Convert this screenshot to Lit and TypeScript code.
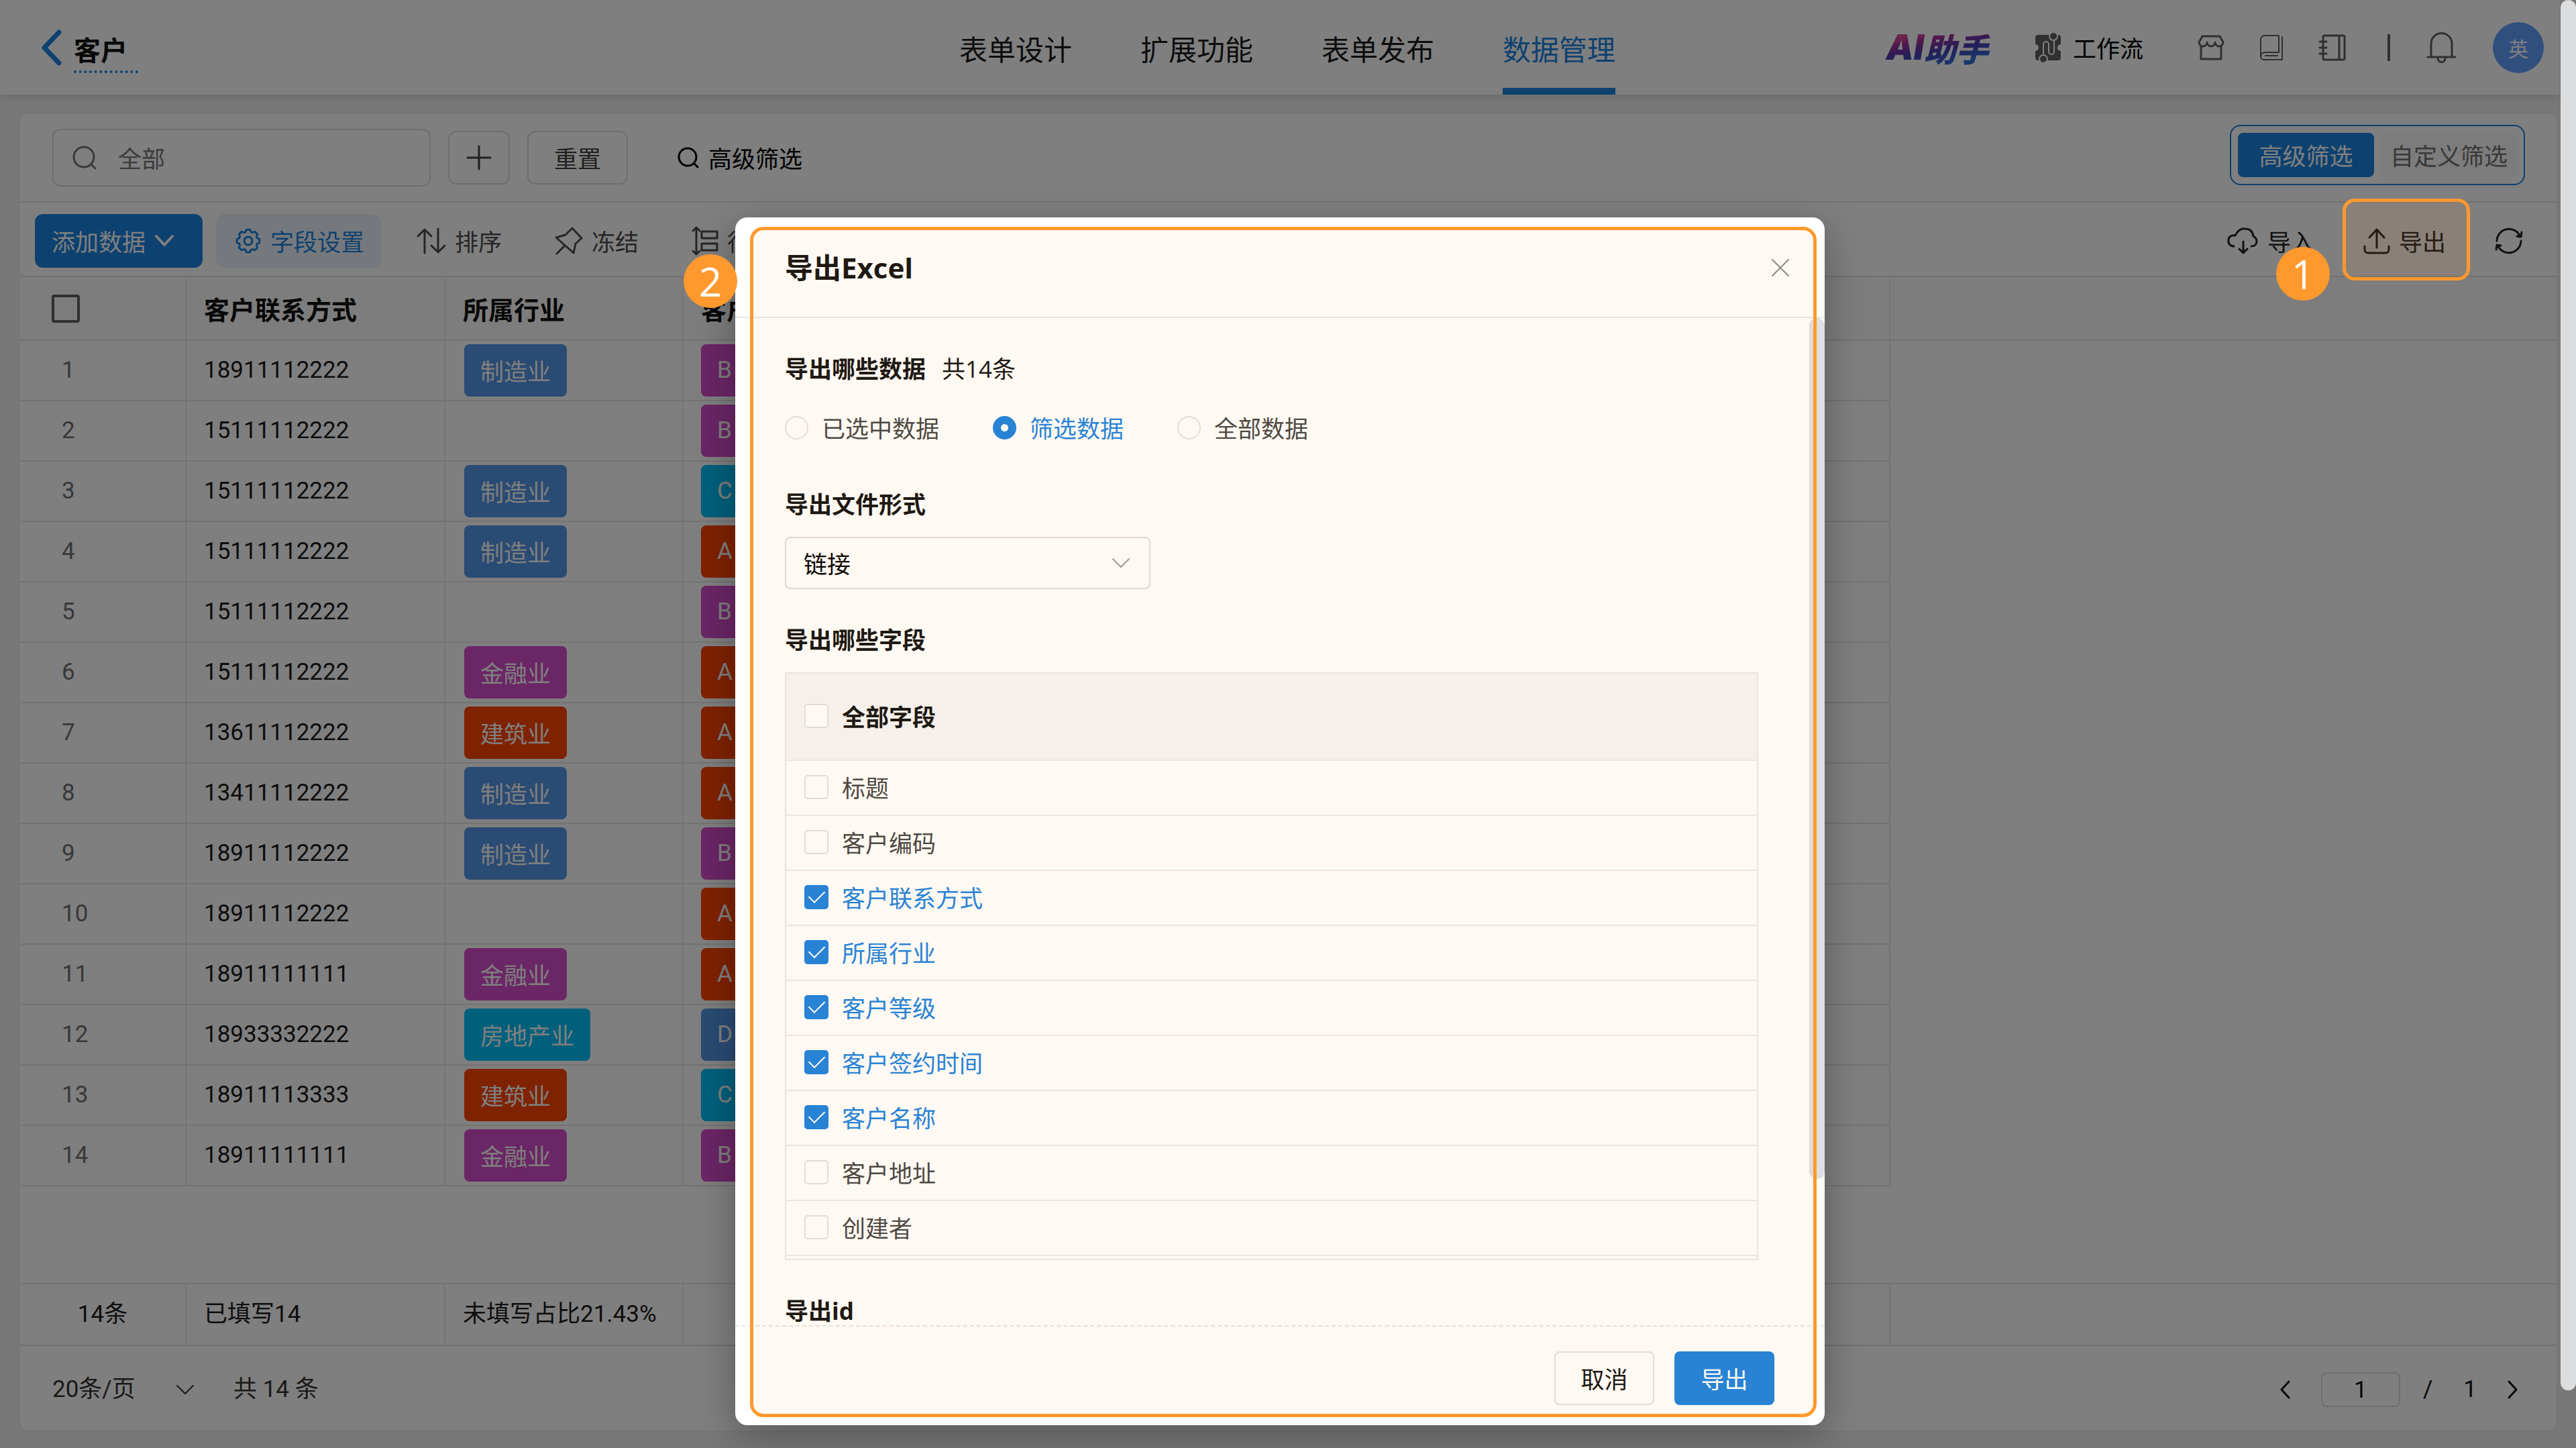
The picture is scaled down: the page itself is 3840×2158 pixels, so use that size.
import { LitElement, html, css, svg, nothing, TemplateResult } from "lit";
import { customElement, property } from "lit/decorators.js";
import { classMap } from "lit/directives/class-map.js";

interface Row {
  phone: string;
  industry: string;
  grade: string;
}

const ROWS: Row[] = [
  { phone: "18911112222", industry: "制造业", grade: "B" },
  { phone: "15111112222", industry: "", grade: "B" },
  { phone: "15111112222", industry: "制造业", grade: "C" },
  { phone: "15111112222", industry: "制造业", grade: "A" },
  { phone: "15111112222", industry: "", grade: "B" },
  { phone: "15111112222", industry: "金融业", grade: "A" },
  { phone: "13611112222", industry: "建筑业", grade: "A" },
  { phone: "13411112222", industry: "制造业", grade: "A" },
  { phone: "18911112222", industry: "制造业", grade: "B" },
  { phone: "18911112222", industry: "", grade: "A" },
  { phone: "18911111111", industry: "金融业", grade: "A" },
  { phone: "18933332222", industry: "房地产业", grade: "D" },
  { phone: "18911113333", industry: "建筑业", grade: "C" },
  { phone: "18911111111", industry: "金融业", grade: "B" },
];

const TONE: Record<string, string> = {
  制造业: "blue",
  金融业: "purple",
  建筑业: "red",
  房地产业: "cyan",
  A: "red",
  B: "purple",
  C: "cyan",
  D: "blue",
};

const FIELDS: [string, boolean][] = [
  ["标题", false],
  ["客户编码", false],
  ["客户联系方式", true],
  ["所属行业", true],
  ["客户等级", true],
  ["客户签约时间", true],
  ["客户名称", true],
  ["客户地址", false],
  ["创建者", false],
];

/** Outline of an eight-toothed cog centred in a 38 unit box. */
const cogPath = (() => {
  const points: string[] = [];
  const at = (radius: number, degrees: number) => {
    const a = (degrees * Math.PI) / 180;
    points.push(`${(19 + radius * Math.sin(a)).toFixed(1)} ${(19 - radius * Math.cos(a)).toFixed(1)}`);
  };
  for (let k = 0; k < 8; k++) {
    at(14, k * 45 - 17);
    at(17, k * 45 - 9);
    at(17, k * 45 + 9);
    at(14, k * 45 + 17);
  }
  return `M${points.join("L")}Z`;
})();

const ICONS: Record<string, { w: number; h: number; body: TemplateResult }> = {
  back: { w: 30, h: 54, body: svg`<path d="M26 4L4 27L26 50" stroke-width="7"/>` },
  flow: {
    w: 38,
    h: 44,
    body: svg`
      <path d="M4 3H34a4 4 0 0 1 4 4V17a5 5 0 0 0 0 10V37a4 4 0 0 1-4 4H4a4 4 0 0 1-4-4V27a5 5 0 0 0 0-10V7a4 4 0 0 1 4-4Z" fill="currentColor" stroke="none"/>
      <path d="M12 36V17a4 4 0 0 1 8 0V28a4 4 0 0 0 8 0V8" stroke="#fff" stroke-width="2"/>
      <circle cx="27" cy="5" r="6" fill="currentColor" stroke="#fff" stroke-width="2"/>
      <circle cx="12" cy="39" r="6" fill="currentColor" stroke="#fff" stroke-width="2"/>`,
  },
  shop: {
    w: 38,
    h: 38,
    body: svg`<path d="M6 2H32L37 11a6 6 0 0 1-12 0a6 6 0 0 1-12 0a6 6 0 0 1-12 0ZM4 17V36H34V17"/>`,
  },
  book: {
    w: 34,
    h: 38,
    body: svg`<path d="M28 1H7A6 6 0 0 0 1 7V32A6 6 0 0 1 7 26H28ZM1 32A5 5 0 0 0 6 37H33V3M8 31H26" stroke-width="2"/>`,
  },
  notebook: {
    w: 40,
    h: 40,
    body: svg`<path d="M8 2H36a2 2 0 0 1 2 2V36a2 2 0 0 1-2 2H8a2 2 0 0 1-2-2V4a2 2 0 0 1 2-2ZM30 2V38M1 11H11M1 20H11M1 29H11"/>`,
  },
  bell: {
    w: 45,
    h: 46,
    body: svg`<path d="M7 36V17A15 15 0 0 1 38 17V36M2 37H43M17 39a5 5 0 0 0 11 0"/>`,
  },
  search: { w: 36, h: 36, body: svg`<circle cx="17" cy="17" r="15"/><path d="M28 28L34 34"/>` },
  find: { w: 32, h: 32, body: svg`<circle cx="15" cy="15" r="13"/><path d="M25 25L30 30"/>` },
  plus: { w: 36, h: 36, body: svg`<path d="M18 1V35M1 18H35"/>` },
  cog: { w: 38, h: 38, body: svg`<path d=${cogPath}/><circle cx="19" cy="19" r="6"/>` },
  sort: { w: 42, h: 38, body: svg`<path d="M11 37V2M1 12L11 2L21 12M31 1V36M21 26L31 36L41 26"/>` },
  pin: { w: 40, h: 40, body: svg`<path d="M1 15L15 11L25 1L39 16L30 24L27 38ZM14 27L2 39"/>` },
  rows: {
    w: 38,
    h: 44,
    body: svg`<path d="M6 2V42M1 7L6 2L11 7M1 37L6 42L11 37M14 8H37V18H14ZM14 26H37V36H14Z"/>`,
  },
  cloud: {
    w: 46,
    h: 40,
    body: svg`<path d="M10 28C5 28 1 24 2 19C2 14 6 11 12 12C15 5 21 1 27 2C34 2 38 6 39 13C43 15 44 18 44 21C44 25 41 28 36 28M24 21V38M18 32L24 38L30 32"/>`,
  },
  upload: {
    w: 38,
    h: 38,
    body: svg`<path d="M19 2V29M8 14L19 2L30 14M1 27V32A5 5 0 0 0 6 37H32A5 5 0 0 0 37 32V27"/>`,
  },
  refresh: {
    w: 40,
    h: 40,
    body: svg`<path d="M2 20A18 18 0 0 1 36 12M38 20A18 18 0 0 1 4 28M39 7L38 14L32 13M1 33L2 26L8 27"/>`,
  },
  caret: { w: 28, h: 18, body: svg`<path d="M2 2L14 15L26 2" stroke-width="4"/>` },
  down: { w: 28, h: 16, body: svg`<path d="M2 2L14 14L26 2" stroke-width="2"/>` },
  left: { w: 16, h: 28, body: svg`<path d="M14 2L3 14L14 26"/>` },
  right: { w: 16, h: 28, body: svg`<path d="M2 2L13 14L2 26"/>` },
  close: { w: 26, h: 26, body: svg`<path d="M1 1L25 25M25 1L1 25" stroke-width="2"/>` },
};

const icon = (name: string, extra = "") => {
  const { w, h, body } = ICONS[name];
  return html`<svg
    class="icon ${extra}"
    width=${w}
    height=${h}
    viewBox="0 0 ${w} ${h}"
    fill="none"
    stroke="currentColor"
    stroke-width="3"
    stroke-linecap="round"
    stroke-linejoin="round"
    aria-hidden="true"
  >
    ${body}
  </svg>`;
};

const base = css`
  * {
    box-sizing: border-box;
  }
  button,
  input,
  select {
    margin: 0;
    padding: 0;
    font: inherit;
    color: inherit;
    background: none;
    border: 0;
    appearance: none;
    outline: none;
  }
  button {
    display: inline-flex;
    align-items: center;
    justify-content: center;
    cursor: pointer;
    white-space: nowrap;
  }
  a {
    color: inherit;
    text-decoration: none;
  }
  .icon {
    display: block;
    flex: none;
    overflow: visible;
  }
`;

@customElement("app-header")
export class AppHeader extends LitElement {
  static styles = [
    base,
    css`
      :host {
        display: block;
        position: relative;
        background: #fff;
        box-shadow: 0 4px 12px rgba(0, 30, 60, 0.12);
      }
      .bar {
        display: grid;
        grid-template-columns: 1fr auto 1fr;
        height: 141px;
        padding: 0 24px 0 46px;
      }
      .back {
        display: flex;
        align-items: center;
        gap: 18px;
        padding-left: 16px;
        color: #1b82e0;
      }
      .title {
        padding: 18px 16px 10px 0;
        border-bottom: 4px dotted #1b82e0;
        font-size: 40px;
        line-height: 44px;
        font-weight: 700;
        color: #111;
      }
      .nav {
        display: flex;
        gap: 102px;
        font-size: 42px;
      }
      .tab {
        display: flex;
        align-items: center;
        border-bottom: 10px solid transparent;
        padding-top: 12px;
        color: #1a1a1a;
      }
      .tab.on {
        color: #1b82e0;
        border-color: #1b82e0;
      }
      .tools {
        display: flex;
        align-items: center;
        justify-content: flex-end;
        gap: 54px;
        color: #606060;
      }
      .ai {
        display: flex;
        align-items: center;
        margin-right: 8px;
        padding: 0 8px;
        font: italic 900 48px/60px "Noto Sans CJK SC", sans-serif;
        color: transparent;
        background: linear-gradient(170deg, #d84a9a 22%, #9a2f9c 36%, #4a3cb0 54%, #2f6cd6 80%);
        background-clip: text;
        -webkit-background-clip: text;
      }
      .latin {
        font: italic 900 52px/60px Inter, sans-serif;
      }
      .flow {
        display: flex;
        align-items: center;
        gap: 18px;
        margin-right: 28px;
      }
      .flow-text {
        color: #000;
      }
      .rule {
        width: 4px;
        height: 40px;
        margin-left: 8px;
        background: #606060;
      }
      .avatar {
        width: 76px;
        height: 76px;
        border-radius: 50%;
        background: #609fff;
        color: #fff;
        font-size: 30px;
      }
    `,
  ];

  render() {
    const tabs = ["表单设计", "扩展功能", "表单发布", "数据管理"];
    return html`<header class="bar">
      <a class="back" href="#">${icon("back")}<span class="title">客户</span></a>
      <nav class="nav">
        ${tabs.map((t, i) => html`<a href="#" class=${classMap({ tab: true, on: i === 3 })}>${t}</a>`)}
      </nav>
      <div class="tools">
        <a class="ai" href="#"><span class="latin">AI</span>助手</a>
        <a class="flow" href="#">${icon("flow")}<span class="flow-text">工作流</span></a>
        <button aria-label="应用市场">${icon("shop")}</button>
        <button aria-label="帮助文档">${icon("book")}</button>
        <button aria-label="通讯录">${icon("notebook")}</button>
        <span class="rule"></span>
        <button aria-label="消息">${icon("bell")}</button>
        <button class="avatar">英</button>
      </div>
    </header>`;
  }
}

@customElement("data-panel")
export class DataPanel extends LitElement {
  static styles = [
    base,
    css`
      :host {
        display: flex;
        flex-direction: column;
        background: #fff;
        border: 2px solid #ececec;
        border-radius: 16px;
      }
      .filters,
      .toolbar {
        display: flex;
        align-items: center;
        border-bottom: 2px solid #e4e4e4;
      }
      .filters {
        height: 133px;
        gap: 26px;
        padding: 0 47px 0 48px;
      }
      .search {
        display: flex;
        align-items: center;
        gap: 32px;
        width: 564px;
        height: 86px;
        padding: 0 28px;
        border: 2px solid #dcdce4;
        border-radius: 12px;
        color: #76767a;
      }
      .search-input {
        flex: 1;
        min-width: 0;
      }
      .search-input::placeholder {
        color: #76767a;
        opacity: 1;
      }
      .box {
        height: 80px;
        border: 2px solid #dcdce4;
        border-radius: 12px;
        color: #404040;
      }
      .box.add {
        width: 92px;
      }
      .box.reset {
        width: 150px;
      }
      .advanced {
        gap: 14px;
        margin-left: 48px;
        color: #000;
      }
      .spacer {
        flex: 1;
      }
      .switch {
        display: flex;
        gap: 10px;
        margin-bottom: 8px;
        padding: 10px;
        border: 2px solid #1b82e0;
        border-radius: 16px;
      }
      .option {
        width: 203px;
        height: 66px;
        border-radius: 8px;
        background: #f8f8f8;
        color: #707070;
      }
      .option.on {
        background: #1b82e0;
        color: #fff;
      }
      .toolbar {
        height: 111px;
        padding: 4px 51px 0 22px;
        color: #4c4c4c;
      }
      .create {
        justify-content: flex-start;
        gap: 14px;
        width: 250px;
        height: 80px;
        padding-left: 25px;
        border-radius: 12px;
        background: #1b82e0;
        color: #fff;
      }
      .fields {
        justify-content: flex-start;
        gap: 14px;
        width: 246px;
        height: 80px;
        margin-left: 20px;
        padding-left: 29px;
        border-radius: 12px;
        background: #eaf3fb;
        color: #1b82e0;
      }
      .tools {
        display: flex;
        gap: 80px;
        margin-left: 54px;
      }
      .io {
        display: flex;
        align-items: center;
        gap: 74px;
        color: #222;
      }
      .tool {
        gap: 14px;
      }
      .marked {
        display: flex;
        position: relative;
      }
      .mark {
        position: absolute;
        z-index: 20;
        inset: -38px -36px -34px -32px;
        border: 5px solid #ff992e;
        border-radius: 18px;
        background: rgba(255, 153, 46, 0.08);
        pointer-events: none;
      }
      .step {
        position: absolute;
        z-index: 21;
        left: -131px;
        top: 34px;
        width: 80px;
        height: 80px;
        border-radius: 50%;
        background: #ff992e;
        color: #fff;
        text-align: center;
        font: 60px/80px "Open Sans", sans-serif;
      }
      .grid {
        width: 2788px;
        table-layout: fixed;
        border-collapse: separate;
        border-spacing: 0;
        text-align: left;
        font-family: Roboto, "Noto Sans CJK SC", sans-serif;
      }
      .c-index {
        width: 248px;
      }
      .c-phone {
        width: 386px;
      }
      .c-industry {
        width: 355px;
      }
      .cell {
        height: 90px;
        padding: 0 26px;
        border-right: 2px solid #ebebee;
        border-bottom: 2px solid #e6e6e6;
        color: #1a1a1a;
        font-weight: 400;
      }
      .cell.index {
        padding-left: 62px;
        color: #707070;
      }
      .cell.industry {
        padding-left: 28px;
        font-family: "Noto Sans CJK SC", sans-serif;
      }
      .head {
        background: #fafafa;
        border-bottom: 2px solid #e4e4e4;
      }
      .head .cell {
        height: 93px;
        border-bottom: 0;
        font-family: "Noto Sans CJK SC", sans-serif;
        font-size: 38px;
        font-weight: 700;
        color: #111;
      }
      .head .cell.index {
        padding-left: 47px;
      }
      .check {
        display: block;
        width: 42px;
        height: 42px;
        border: 4px solid #606060;
        border-radius: 4px;
      }
      .tag {
        display: block;
        width: fit-content;
        padding: 0 24px;
        border-radius: 8px;
        line-height: 78px;
        color: #fff;
      }
      .blue {
        background: #5496e6;
      }
      .purple {
        background: #d64ccc;
      }
      .red {
        background: #ff4400;
      }
      .cyan {
        background: #00c0f8;
      }
      .summary {
        border-top: 2px solid #e4e4e4;
        border-bottom: 2px solid #e0e0e0;
      }
      .summary .cell {
        border-bottom: 0;
      }
      .summary .cell.total {
        text-align: center;
      }
      .foot {
        display: flex;
        align-items: center;
        height: 126px;
        padding: 4px 57px 0 48px;
        color: #333;
        font-family: Roboto, "Noto Sans CJK SC", sans-serif;
      }
      .size {
        display: flex;
        align-items: center;
        width: 270px;
      }
      .size-select {
        width: 210px;
        margin-right: -26px;
        padding-right: 26px;
      }
      .pager {
        display: flex;
        align-items: center;
        gap: 46px;
        margin-left: auto;
        color: #111;
      }
      .page {
        width: 118px;
        height: 52px;
        border: 2px solid #dcdce4;
        border-radius: 8px;
        text-align: center;
      }
      .total-pages {
        display: flex;
        gap: 46px;
        margin-left: -12px;
      }
      .count {
        white-space: pre;
      }
    `,
  ];

  private columns() {
    return html`<colgroup>
      <col class="c-index" />
      <col class="c-phone" />
      <col class="c-industry" />
      <col />
    </colgroup>`;
  }

  private tag(text: string) {
    return text ? html`<span class="tag ${TONE[text]}">${text}</span>` : nothing;
  }

  render() {
    return html`
      <div class="filters">
        <label class="search">
          ${icon("search")}
          <input class="search-input" type="text" placeholder="全部" aria-label="搜索" />
        </label>
        <button class="box add" aria-label="添加条件">${icon("plus")}</button>
        <button class="box reset">重置</button>
        <button class="advanced">${icon("find")}高级筛选</button>
        <span class="spacer"></span>
        <div class="switch">
          <button class="option on">高级筛选</button>
          <button class="option">自定义筛选</button>
        </div>
      </div>
      <div class="toolbar">
        <button class="create">添加数据${icon("caret")}</button>
        <button class="fields">${icon("cog")}字段设置</button>
        <div class="tools">
          <button class="tool">${icon("sort")}排序</button>
          <button class="tool">${icon("pin")}冻结</button>
          <button class="tool">${icon("rows")}行高</button>
        </div>
        <span class="spacer"></span>
        <div class="io">
          <button class="tool">${icon("cloud")}导入</button>
          <div class="marked">
            <button class="tool">${icon("upload")}导出</button>
            <span class="mark"></span>
            <span class="step">1</span>
          </div>
          <button aria-label="刷新">${icon("refresh")}</button>
        </div>
      </div>
      <div class="head">
        <table class="grid">
          ${this.columns()}
          <tr>
            <th class="cell index"><input class="check" type="checkbox" aria-label="全选" /></th>
            <th class="cell">客户联系方式</th>
            <th class="cell">所属行业</th>
            <th class="cell">客户等级</th>
          </tr>
        </table>
      </div>
      <table class="grid">
        ${this.columns()}
        <tbody>
          ${ROWS.map(
            (r, i) => html`<tr>
              <td class="cell index">${i + 1}</td>
              <td class="cell">${r.phone}</td>
              <td class="cell industry">${this.tag(r.industry)}</td>
              <td class="cell">${this.tag(r.grade)}</td>
            </tr>`
          )}
        </tbody>
      </table>
      <span class="spacer"></span>
      <div class="summary">
        <table class="grid">
          ${this.columns()}
          <tr>
            <td class="cell total">14条</td>
            <td class="cell">已填写14</td>
            <td class="cell">未填写占比21.43%</td>
            <td class="cell"></td>
          </tr>
        </table>
      </div>
      <footer class="foot">
        <label class="size">
          <select class="size-select" aria-label="每页条数">
            <option>20条/页</option>
          </select>
          ${icon("down")}
        </label>
        <span class="count">共 14 条</span>
        <div class="pager">
          <button aria-label="上一页">${icon("left")}</button>
          <input class="page" type="text" .value=${"1"} aria-label="页码" />
          <span class="total-pages"><span>/</span><span>1</span></span>
          <button aria-label="下一页">${icon("right")}</button>
        </div>
      </footer>
    `;
  }
}

@customElement("export-dialog")
export class ExportDialog extends LitElement {
  @property({ type: Number }) count = 14;

  static styles = [
    base,
    css`
      :host {
        display: flex;
        flex-direction: column;
        position: relative;
        width: 1624px;
        max-width: 92%;
        height: 100%;
        background: #fff;
        border-radius: 18px;
        box-shadow: 0 16px 60px rgba(0, 0, 0, 0.3);
        color: #111;
      }
      .head {
        display: flex;
        align-items: center;
        justify-content: space-between;
        height: 150px;
        flex: none;
        padding: 2px 53px 0 74px;
        border-bottom: 2px solid #e8e8ea;
      }
      .title {
        margin: 0;
        font: 700 42px/60px "Open Sans", "Noto Sans CJK SC", sans-serif;
      }
      .close {
        color: #888;
      }
      .body {
        position: relative;
        display: flex;
        flex-direction: column;
        flex: 1;
        min-height: 0;
        gap: 56px;
        padding: 56px 99px 0 74px;
        overflow: hidden;
      }
      .thumb {
        position: absolute;
        top: 0;
        right: 0;
        width: 23px;
        height: 1283px;
        border-radius: 12px;
        background: #dfe0e2;
      }
      .section {
        display: flex;
        flex-direction: column;
        flex: none;
        gap: 28px;
      }
      .heading {
        display: flex;
        gap: 24px;
        margin: 0;
        font: 700 35px/40px "Open Sans", "Noto Sans CJK SC", sans-serif;
      }
      .note {
        font-weight: 400;
      }
      .radios {
        display: flex;
        align-items: center;
        gap: 80px;
        height: 78px;
      }
      .choice {
        display: flex;
        align-items: center;
        gap: 20px;
        color: #444;
      }
      .choice.on {
        color: #1b82e0;
      }
      .radio {
        width: 35px;
        height: 35px;
        border: 2px solid #e2e2e4;
        border-radius: 50%;
      }
      .radio:checked {
        border: 12px solid #1b82e0;
        background: #fff;
      }
      .select {
        display: flex;
        align-items: center;
        width: 545px;
        height: 78px;
        border: 2px solid #dcdce0;
        border-radius: 8px;
      }
      .select-input {
        flex: 1;
        height: 100%;
        padding: 0 56px 0 26px;
        margin-right: -56px;
        color: #000;
      }
      .arrow {
        margin-right: 28px;
        color: #999;
      }
      .list {
        margin: 0;
        padding: 0 0 4px;
        list-style: none;
        border: 2px solid #e8e8ec;
      }
      .item {
        display: flex;
        height: 82px;
        border-bottom: 2px solid #ebebee;
      }
      .item.all {
        height: 130px;
        background: #f6f6f6;
        font-weight: 700;
      }
      .item .choice {
        flex: 1;
        padding: 0 0 2px 27px;
      }
      .item.all .choice {
        color: #111;
      }
      .check {
        display: flex;
        align-items: center;
        justify-content: center;
        width: 36px;
        height: 36px;
        border: 2px solid #e2e0e2;
        border-radius: 5px;
        background: #fff;
      }
      .check:checked {
        border-color: #1b82e0;
        background: #1b82e0;
      }
      .check:checked::after {
        content: "";
        width: 11px;
        height: 21px;
        margin-bottom: 7px;
        border: solid #fff;
        border-width: 0 2px 2px 0;
        transform: rotate(45deg);
      }
      .foot {
        display: flex;
        align-items: center;
        justify-content: flex-end;
        flex: none;
        gap: 30px;
        height: 149px;
        padding: 6px 75px 0 0;
        border-top: 2px dashed #e4e4e6;
      }
      .btn {
        width: 149px;
        height: 80px;
        border: 2px solid #e0e0e4;
        border-radius: 8px;
      }
      .btn.primary {
        border-color: #1b82e0;
        background: #1b82e0;
        color: #fff;
      }
      .frame {
        position: absolute;
        inset: 14px 12px 12px 22px;
        border: 5px solid #ff992e;
        border-radius: 20px;
        background: rgba(255, 153, 46, 0.06);
        pointer-events: none;
      }
      .step {
        position: absolute;
        left: -77px;
        top: 55px;
        width: 80px;
        height: 80px;
        border-radius: 50%;
        background: #ff992e;
        color: #fff;
        text-align: center;
        font: 60px/80px "Open Sans", sans-serif;
      }
    `,
  ];

  render() {
    const scopes = ["已选中数据", "筛选数据", "全部数据"];
    return html`
      <header class="head">
        <h2 class="title">导出Excel</h2>
        <button class="close" aria-label="关闭">${icon("close")}</button>
      </header>
      <div class="body">
        <section class="section">
          <h3 class="heading">导出哪些数据<span class="note">共${this.count}条</span></h3>
          <div class="radios">
            ${scopes.map(
              (s, i) => html`<label class=${classMap({ choice: true, on: i === 1 })}>
                <input class="radio" type="radio" name="scope" ?checked=${i === 1} />${s}
              </label>`
            )}
          </div>
        </section>
        <section class="section">
          <h3 class="heading">导出文件形式</h3>
          <label class="select">
            <select class="select-input" aria-label="导出文件形式">
              <option>链接</option>
            </select>
            ${icon("down", "arrow")}
          </label>
        </section>
        <section class="section">
          <h3 class="heading">导出哪些字段</h3>
          <ul class="list">
            <li class="item all">
              <label class="choice"><input class="check" type="checkbox" />全部字段</label>
            </li>
            ${FIELDS.map(
              ([name, on]) => html`<li class="item">
                <label class=${classMap({ choice: true, on })}>
                  <input class="check" type="checkbox" ?checked=${on} />${name}
                </label>
              </li>`
            )}
          </ul>
        </section>
        <section class="section">
          <h3 class="heading">导出id</h3>
        </section>
        <span class="thumb"></span>
      </div>
      <footer class="foot">
        <button class="btn">取消</button>
        <button class="btn primary">导出</button>
      </footer>
      <span class="frame"></span>
      <span class="step">2</span>
    `;
  }
}

@customElement("app-root")
export class AppRoot extends LitElement {
  static styles = [
    base,
    css`
      :host {
        display: block;
        position: relative;
        font: 35px/50px "Noto Sans CJK SC", sans-serif;
      }
      .layout {
        display: flex;
        min-height: 100vh;
        background: #f1f1f1;
      }
      .main {
        display: flex;
        flex-direction: column;
        flex: 1;
        min-width: 0;
      }
      .panel {
        flex: 1;
        margin: 26px 3px 24px 28px;
      }
      .rail {
        width: 24px;
        flex: none;
      }
      .thumb {
        display: block;
        position: relative;
        z-index: 12;
        width: 23px;
        height: 96vh;
        margin-left: 1px;
        border-radius: 12px;
        background: #dcdddf;
      }
      .mask {
        position: absolute;
        inset: 0;
        z-index: 10;
        background: rgba(0, 0, 0, 0.5);
      }
      .stage {
        position: absolute;
        inset: 0 24px 0 0;
        z-index: 11;
        display: flex;
        justify-content: center;
        padding: 324px 0 34px;
      }
    `,
  ];

  render() {
    return html`
      <div class="layout">
        <main class="main">
          <app-header></app-header>
          <data-panel class="panel"></data-panel>
        </main>
        <div class="rail"><span class="thumb"></span></div>
      </div>
      <div class="mask"></div>
      <div class="stage"><export-dialog role="dialog" aria-label="导出Excel"></export-dialog></div>
    `;
  }
}
